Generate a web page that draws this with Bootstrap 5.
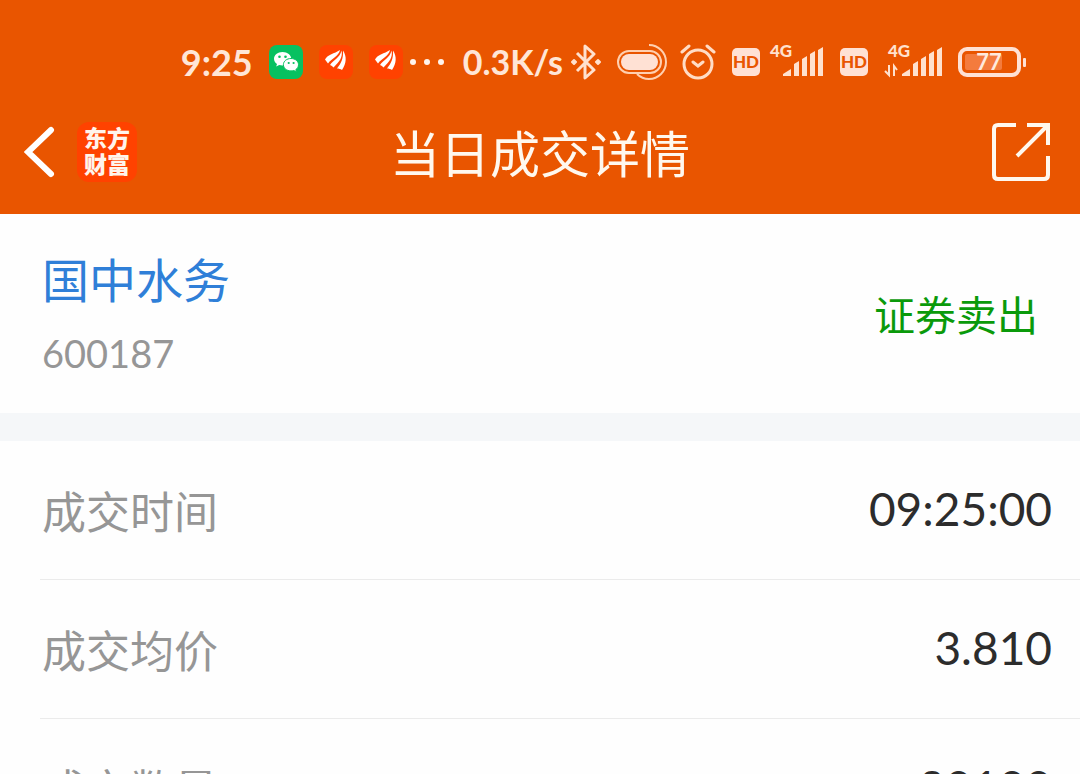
<!DOCTYPE html>
<html lang="zh-CN">
<head>
<meta charset="utf-8">
<meta name="viewport" content="width=device-width, initial-scale=1">
<title>当日成交详情</title>
<link href="https://cdn.jsdelivr.net/npm/bootstrap@5.3.0/dist/css/bootstrap.min.css" rel="stylesheet">
<style>
  body { font-family: Lato, "Noto Sans CJK SC", sans-serif; background: #fefefe; color: #2c2c2c; overflow-x: hidden; }
  svg { display: block; flex: none; }
  .top-area { background: #e95500; color: #fff8ee; }
  .status-line { height: 124px; padding-right: 53px; color: #ffe6d6; }
  .status-text { font-size: 36px; line-height: 40px; font-weight: 700; }
  .speed-text { font-size: 34px; line-height: 40px; font-weight: 700; }
  .alarm-gap { margin-left: 13px; }
  .title-line { height: 90px; padding: 0 28px 34px 24px; }
  .title-side { flex: 1 1 0; }
  .page-title { font-size: 50px; line-height: 60px; font-weight: 400; padding: 4px 0 0 4px; }
  .app-link { width: 60px; height: 60px; margin-left: 21px; border-radius: 12px; background: #ff4200; color: #fff4ec; font: 900 23px/26px "Noto Sans CJK SC", sans-serif; text-decoration: none; padding-bottom: 4px; }
  .stock-area { height: 199px; padding: 0 42px; }
  .stock-name { font-size: 47px; line-height: 62px; color: #2f7fd8; text-decoration: none; }
  .stock-code { font-size: 38px; line-height: 52px; color: #969696; }
  .trade-side { font-size: 41px; line-height: 56px; color: #0a9a0a; padding-top: 4px; }
  .band { height: 28px; background: #f5f7f9; }
  .detail-list { height: 333px; overflow: hidden; }
  .detail-row { height: 139px; margin-left: 40px; padding: 3px 28px 0 2px; border-bottom: 1px solid #ebebeb; }
  .detail-row dt { font-size: 44px; line-height: 60px; font-weight: 400; color: #969696; }
  .detail-row dd { font-size: 46px; line-height: 60px; padding-bottom: 6px; }
</style>
</head>
<body>
<header class="top-area">
  <div class="status-line d-flex align-items-center justify-content-end">
    <span class="status-text">9:25</span>
    <svg class="ms-3" width="34" height="34" viewBox="0 0 34 34" aria-hidden="true">
      <rect width="34" height="34" rx="8" fill="#07c160"/>
      <path d="M13.500 7C8.500 7 5 10 5 13.800c0 2.200 1.200 4 3 5.200l-.8 2.500 3-1.500c1 .3 2.100.5 3.300.5 5 0 8.800-3 8.800-6.700S18.500 7 13.500 7z" fill="#fff"/>
      <path d="M22 13.500c-4.300 0-7.600 2.700-7.600 6.200s3.300 6.200 7.600 6.200c1 0 2-.2 2.800-.4l2.700 1.400-.7-2.300c1.700-1.200 2.700-2.900 2.700-4.900 0-3.500-3.200-6.200-7.500-6.200z" fill="#fff" stroke="#07c160"/>
      <g fill="#07c160"><circle cx="10.500" cy="11.800" r="1.300"/><circle cx="16.500" cy="11.800" r="1.300"/><circle cx="19.700" cy="18" r="1.100"/><circle cx="24.600" cy="18" r="1.100"/></g>
    </svg>
    <svg class="ms-3" width="34" height="34" viewBox="0 0 34 34" aria-hidden="true">
      <rect width="34" height="34" rx="8" fill="#ff4200"/>
      <g id="feathers" fill="#fff"><path d="M6 14.500C9 9 15 9 21 5c-1 6-8 8-12 13.500C8 17 7 16 6 14.500z"/><path d="M11 20C14 15 21 13 22.500 5.500c1.500 7-2 11-8 17-1-1-2-2-3.500-2.500z"/><path d="M18 23.500c4-5 6.500-10 6-18 4 6 3.500 13-1 19.500-1.500-1-3-1.500-5-1.500z"/></g>
    </svg>
    <svg class="ms-3" width="34" height="34" viewBox="0 0 34 34" aria-hidden="true">
      <rect width="34" height="34" rx="8" fill="#ff4200"/><use href="#feathers"/>
    </svg>
    <svg class="ms-1" width="40" height="34" viewBox="0 0 40 34" fill="#fff4ec" aria-hidden="true"><circle cx="6" cy="17" r="3"/><circle cx="20" cy="17" r="3"/><circle cx="34" cy="17" r="3"/></svg>
    <span class="speed-text ms-3">0.3K/s</span>
    <svg class="ms-2" width="30" height="36" viewBox="0 0 30 36" fill="none" stroke="#ffe1ce" stroke-width="3" stroke-linejoin="round" aria-hidden="true"><path d="M6 9l17 17-9 8V2l9 8L6 27"/><path d="M1 18l2-2 2 2-2 2zM25 18l2-2 2 2-2 2z" fill="#ffe1ce" stroke-width="2"/></svg>
    <svg class="ms-3" width="50" height="36" viewBox="0 0 50 36" fill="none" stroke="#ffd0b0" stroke-width="2" aria-hidden="true"><rect x="1" y="7" width="43" height="22" rx="11"/><rect x="4" y="10" width="37" height="16" rx="8" fill="#ffe1d4" stroke="none"/><path d="M32 1a17 17 0 0 1 0 34q-7 0-12-5"/></svg>
    <svg class="alarm-gap" width="36" height="36" viewBox="0 0 36 36" fill="none" stroke="#ffdcc5" stroke-width="3" stroke-linecap="round" aria-hidden="true"><circle cx="18" cy="20" r="14"/><path d="M2 8l7-6M34 8l-7-6M13 18l5 4 5-4"/></svg>
    <svg class="ms-3" width="28" height="28" viewBox="0 0 28 28" role="img"><g id="hd"><rect width="28" height="28" rx="5" fill="#ffe1d4"/><text x="14" y="20" text-anchor="middle" font-family="Lato, sans-serif" font-size="17" font-weight="900" fill="#e95500">HD</text></g></svg>
    <svg class="ms-2" width="56" height="46" viewBox="0 -2 56 46" role="img"><text x="2" y="16" font-family="Lato, sans-serif" font-size="17" font-weight="900" fill="#ffe1ce">4G</text><path id="bars" d="M15 35v-2l8-5v7zM26 35V23l5-3v15zM34 35V18l5-3v20zM42 35V13l5-3v25zM50 35V9l5-3v29z" fill="#ffe1ce"/></svg>
    <svg class="ms-3" width="28" height="28" viewBox="0 0 28 28" role="img"><use href="#hd"/></svg>
    <svg class="ms-3" width="58" height="46" viewBox="0 -2 58 46" role="img"><text x="4" y="16" font-family="Lato, sans-serif" font-size="17" font-weight="900" fill="#ffe1ce">4G</text><use href="#bars" x="3"/><path d="M5 24v10l-4-4M10 35V25l3 4" fill="none" stroke="#ffe1ce" stroke-width="2"/></svg>
    <svg class="ms-3" width="69" height="32" viewBox="0 0 69 32" role="img"><rect x="2" y="3" width="59" height="26" rx="7" fill="none" stroke="#ffe1d4" stroke-width="4"/><rect x="7" y="8" width="37" height="16" rx="2" fill="#f47b3d"/><rect x="65" y="12" width="3" height="9" rx="1" fill="#ffe1d4"/><text x="31" y="24" text-anchor="middle" font-family="Lato, sans-serif" font-size="22" font-weight="700" fill="#ffeadd">77</text></svg>
  </div>
  <div class="title-line d-flex align-items-center">
    <div class="title-side d-flex align-items-center">
      <button class="btn p-0 border-0" type="button" aria-label="返回"><svg width="32" height="52" viewBox="0 0 32 52" fill="none" stroke="#fff" stroke-width="6" stroke-linecap="round"><path d="M27 4L4 26l23 22"/></svg></button>
      <a class="app-link d-flex flex-column justify-content-center text-center" href="#"><span>东方</span><span>财富</span></a>
    </div>
    <h1 class="page-title mb-0">当日成交详情</h1>
    <div class="title-side d-flex justify-content-end">
      <button class="btn p-0 border-0" type="button" aria-label="分享"><svg width="62" height="62" viewBox="0 0 62 62" fill="none" stroke="#fff8ee" stroke-width="4"><path d="M26 4H8q-4 0-4 4v46q0 4 4 4h46q4 0 4-4V35M37 4h21v20M58 4L27 35"/></svg></button>
    </div>
  </div>
</header>
<main>
  <section class="stock-area d-flex align-items-center justify-content-between">
    <div class="d-flex flex-column gap-3"><a class="stock-name" href="#">国中水务</a><span class="stock-code">600187</span></div>
    <span class="trade-side">证券卖出</span>
  </section>
  <div class="band"></div>
  <dl class="detail-list mb-0">
    <div class="detail-row d-flex align-items-center justify-content-between"><dt>成交时间</dt><dd class="mb-0">09:25:00</dd></div>
    <div class="detail-row d-flex align-items-center justify-content-between"><dt>成交均价</dt><dd class="mb-0">3.810</dd></div>
    <div class="detail-row d-flex align-items-center justify-content-between"><dt>成交数量</dt><dd class="mb-0">20100</dd></div>
  </dl>
</main>
<script src="https://cdn.jsdelivr.net/npm/bootstrap@5.3.0/dist/js/bootstrap.bundle.min.js"></script>
</body>
</html>
